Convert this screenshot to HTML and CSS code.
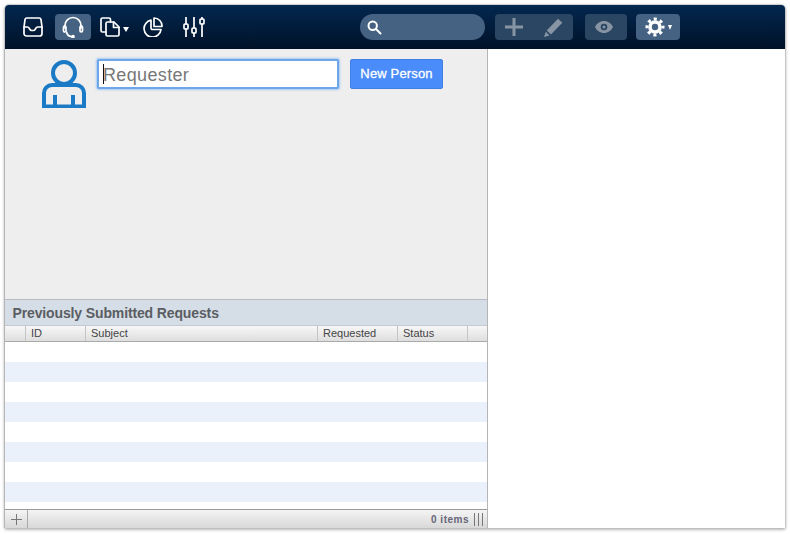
FILE: index.html
```html
<!DOCTYPE html>
<html lang="en">
<head>
<meta charset="utf-8">
<title>New Request</title>
<link rel="stylesheet" href="styles.css">
</head>
<body>
<div class="window">
  <header class="toolbar">
    <div class="tool-left">
      <button class="tool tool-inbox" aria-label="Inbox">
        <svg width="20" height="20" viewBox="0 0 20 20" class="ico"><path d="M4 1h12a2 2 0 0 1 2 1.700L19 10v6.500a2.500 2.500 0 0 1-2.500 2.500h-13A2.500 2.500 0 0 1 1 16.500V10l1-7.300A2 2 0 0 1 4 1z"/><path d="M1 10h3.500c.8 0 1.200.5 1.700 1.300l.6 1c.4.700 1 1.200 1.800 1.200h1.800c.8 0 1.400-.5 1.800-1.200l.6-1c.5-.8.9-1.300 1.700-1.300H19"/></svg>
      </button>
      <button class="tool tool-on" aria-label="Support">
        <svg width="22" height="22" viewBox="0 0 22 22" class="ico"><path d="M3 12V9.500a8 8 0 0 1 16 0V12"/><rect x="1.500" y="10" width="2.500" height="6" rx="1.200"/><rect x="18" y="10" width="2.500" height="6" rx="1.200"/><path d="M4.500 16c.5 2.800 2.500 4.300 5 4.600"/><circle cx="11" cy="20.600" r="1"/></svg>
      </button>
      <button class="tool tool-docs" aria-label="Documents">
        <svg width="20" height="20" viewBox="0 0 20 20" class="ico"><path d="M6 15H2.500A1.500 1.500 0 0 1 1 13.500v-11A1.500 1.500 0 0 1 2.500 1H9a1.500 1.500 0 0 1 1.500 1.500V5"/><path d="M7.500 5H14l5 5v7.500a1.500 1.500 0 0 1-1.500 1.500h-10A1.500 1.500 0 0 1 6 17.500v-11A1.500 1.500 0 0 1 7.500 5z"/><path d="M13.500 5v5.500H19"/></svg>
        <span class="caret"></span>
      </button>
      <button class="tool tool-pie" aria-label="Reports">
        <svg width="20" height="20" viewBox="0 0 20 20" class="ico"><path d="M8 3.200A8.500 8.500 0 1 0 18 12.500H9.500a1.500 1.500 0 0 1-1.500-1.500z"/><path d="M11 1a8 8 0 0 1 8 8.500h-8z"/></svg>
      </button>
      <button class="tool tool-sliders" aria-label="Settings">
        <svg width="22" height="20" viewBox="0 0 22 20" class="ico"><path d="M3 0v7M3 12v8M11 0v11M11 16v4M19 0v2M19 7v13"/><rect x="1" y="7" width="4" height="5" rx="1"/><rect x="9" y="11" width="4" height="5" rx="1"/><rect x="17" y="2" width="4" height="5" rx="1"/></svg>
      </button>
    </div>
    <div class="search">
      <svg width="15" height="15" viewBox="0 0 15 15" class="ico ico-thick"><circle cx="5.700" cy="5.700" r="4.200"/><path d="M9 9l4.500 4.500"/></svg>
    </div>
    <div class="group group-edit">
      <svg width="18" height="18" viewBox="0 0 18 18" class="glyph"><path d="M7.500 0h3v7.500H18v3h-7.500V18h-3v-7.500H0v-3h7.500z"/></svg>
      <svg width="19" height="19" viewBox="0 0 19 19" class="glyph"><path d="M14 .7l4.300 4L7 16.500 2.700 12.500zM1.800 13.800l3.700 3.700L0 19z"/></svg>
    </div>
    <div class="group group-eye">
      <svg width="18" height="12" viewBox="0 0 18 12" class="glyph"><path fill-rule="evenodd" d="M9 0c4 0 7.300 2.500 9 6-1.700 3.500-5 6-9 6s-7.300-2.500-9-6c1.700-3.500 5-6 9-6zm0 2.700a3.300 3.300 0 1 0 0 6.600 3.300 3.300 0 0 0 0-6.600z"/><circle cx="9" cy="6" r="1.500"/></svg>
    </div>
    <div class="group group-gear">
      <svg width="20" height="20" viewBox="0 0 20 20" class="gear"><circle class="gear-body" cx="10" cy="10" r="5"/><circle class="gear-teeth" cx="10" cy="10" r="8"/></svg>
      <span class="caret"></span>
    </div>
  </header>
  <div class="content">
    <section class="left">
      <div class="form">
        <svg class="person" width="44" height="48" viewBox="0 0 44 48"><circle cx="22" cy="13" r="11"/><path d="M2 46.500V33a8 8 0 0 1 8-8h24a8 8 0 0 1 8 8v13.500z"/><path d="M13 35v11M31 35v11"/></svg>
        <div class="field"><span class="cursor"></span><span class="placeholder">Requester</span></div>
        <button class="primary">New Person</button>
      </div>
      <h2 class="section-title">Previously Submitted Requests</h2>
      <div class="thead">
        <div class="th"></div>
        <div class="th">ID</div>
        <div class="th">Subject</div>
        <div class="th">Requested</div>
        <div class="th">Status</div>
        <div class="th"></div>
      </div>
      <div class="tbody">
        <div class="row"></div><div class="row"></div><div class="row"></div><div class="row"></div>
        <div class="row"></div><div class="row"></div><div class="row"></div><div class="row"></div>
      </div>
      <footer class="status">
        <div class="add"><svg width="11" height="11" viewBox="0 0 11 11"><path d="M5 0h1v5h5v1H6v5H5V6H0V5h5z"/></svg></div>
        <div class="count">0 items</div>
        <div class="bars"><i></i><i></i><i></i></div>
      </footer>
    </section>
    <section class="right"></section>
  </div>
</div>
</body>
</html>
```
FILE: styles.css
```css
* { box-sizing: border-box; }
html, body { margin: 0; height: 100%; background: #fff; overflow: hidden; }
body { font-family: "Liberation Sans", Arial, sans-serif; padding: 5px 5px 6px; }
button { font-family: inherit; border: 0; padding: 0; background: none; }

.window {
  height: 523px;
  display: flex;
  flex-direction: column;
  background: #fff;
  border-radius: 4px 4px 2px 2px;
  box-shadow: 0 0 0 .5px #bbb, 0 1px 3px 1px rgba(0,0,0,.28);
}

.toolbar {
  height: 44px;
  flex: none;
  display: flex;
  align-items: center;
  padding: 0 0 0 18px;
  background: linear-gradient(#03274f, #001228);
  border-radius: 4px 4px 0 0;
}
.tool-left { display: flex; align-items: center; width: 337px; }
.tool { height: 26px; display: flex; align-items: center; justify-content: center; border-radius: 4px; }
.tool-inbox { width: 20px; margin-right: 12px; }
.tool-on { width: 36px; background: #456282; margin-right: 9px; }
.tool-docs { width: 29px; justify-content: flex-start; margin-right: 14px; gap: 3px; }
.tool-docs .caret { margin-top: 5px; border-left-width: 3px; border-right-width: 3px; border-top-width: 5px; }
.tool-pie { width: 20px; margin-right: 20px; }
.tool-sliders { width: 22px; }

.ico { fill: none; stroke: #fff; stroke-width: 1.700; stroke-linecap: round; stroke-linejoin: round; display: block; }
.ico-thick { stroke-width: 2; }
.caret { width: 0; height: 0; border-left: 2.500px solid transparent; border-right: 2.500px solid transparent; border-top: 5px solid #fff; }

.search {
  width: 125px;
  height: 26px;
  border-radius: 13px;
  background: #456282;
  display: flex;
  align-items: center;
  padding-left: 7px;
  margin-right: 10px;
}
.group { height: 26px; border-radius: 4px; display: flex; align-items: center; background: #2a4663; }
.group-edit { width: 78px; padding-left: 10px; gap: 21px; margin-right: 12px; }
.group-eye { width: 42px; justify-content: center; margin-right: 9px; padding-right: 4px; }
.group-gear { width: 44px; padding-left: 9px; gap: 3px; background: #456282; }
.glyph { fill: #8794a3; display: block; }
.gear { fill: none; stroke: #fff; display: block; }
.gear-body { stroke-width: 3.600; }
.gear-teeth { stroke-width: 3; stroke-dasharray: 3.100 3.183; stroke-dashoffset: 1.550; }

.content { flex: 1; display: flex; min-height: 0; }
.left { width: 483px; display: flex; flex-direction: column; border-right: 1px solid #b5b5b5; box-shadow: -1px 0 0 #b5b5b5; }
.right { flex: 1; background: #fff; }

.form {
  height: 250px;
  flex: none;
  background: #eee;
  display: flex;
  align-items: flex-start;
  padding: 11px 0 0 37px;
}
.person { fill: none; stroke: #1b7ac6; stroke-width: 4; margin-right: 11px; flex: none; }
.field {
  width: 242px;
  height: 30px;
  margin-top: -1px;
  background: #fff;
  border: 2px solid #6ea6ea;
  box-shadow: 0 0 2px 1px #a3c9f3;
  border-radius: 2px;
  display: flex;
  align-items: center;
  padding-left: 4px;
  position: relative;
}
.cursor { width: 1px; height: 20px; background: #111; margin-right: -1px; }
.placeholder { font-size: 18px; color: #777; letter-spacing: .35px; padding-top: 2px; }
.primary {
  margin: -1px 0 0 11px;
  width: 93px;
  height: 30px;
  padding: 0 0 2px;
  background: #4a8cf9;
  border: 1px solid #3f7fe6;
  border-radius: 2px;
  color: #fff;
  font-size: 13px;
  letter-spacing: .15px;
  -webkit-text-stroke: .3px #fff;
}

.section-title {
  margin: 0;
  height: 27px;
  flex: none;
  display: flex;
  align-items: center;
  padding-left: 7.500px;
  background: #d5dde7;
  border-top: 1px solid #b9bcc2;
  border-bottom: 1px solid #c5c9cf;
  color: #5a5d62;
  font-size: 14px;
  font-weight: bold;
  letter-spacing: -.13px;
}

.thead {
  height: 16px;
  flex: none;
  display: grid;
  grid-template-columns: 21px 60px 232px 80px 70px 1fr;
  background: linear-gradient(#f7f7f7, #dedede);
  border-bottom: 1px solid #aaa;
}
.th {
  border-right: 1px solid #c4c4c4;
  font-size: 11px;
  line-height: 15px;
  color: #444;
  padding-left: 5px;
}
.th:last-child { border-right: 0; }

.tbody { flex: 1; min-height: 0; overflow: hidden; background: #fff; }
.row { height: 20px; }
.row:nth-child(even) { background: #ebf1fb; }

.status {
  height: 19px;
  flex: none;
  display: flex;
  align-items: center;
  background: linear-gradient(#f4f4f4, #d8d8d8);
  border-top: 1px solid #999;
}
.add { width: 23px; height: 100%; display: flex; align-items: center; justify-content: center; border-right: 1px solid #aaa; }
.add svg { fill: #777; display: block; }
.count { margin-left: auto; font-size: 10px; font-weight: bold; color: #667; letter-spacing: .5px; }
.bars { display: flex; gap: 3px; margin: 0 4px 0 5px; height: 13px; }
.bars i { width: 1px; background: #777; display: block; }
```
